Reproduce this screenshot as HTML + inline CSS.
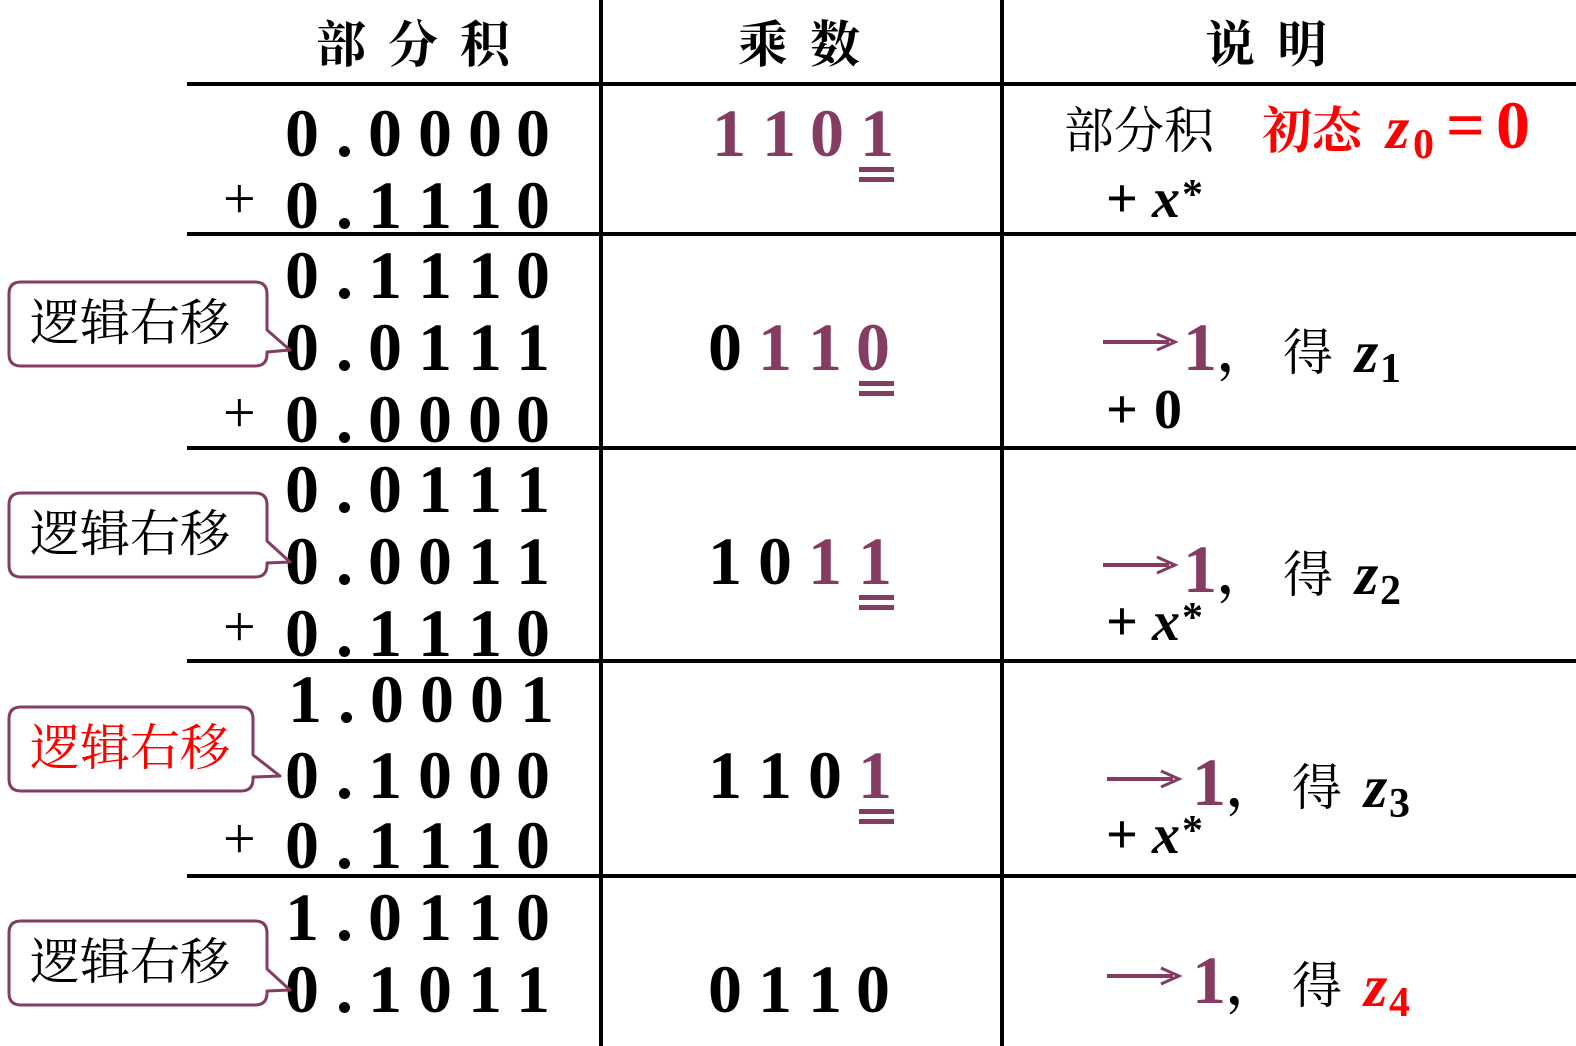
<!DOCTYPE html>
<html><head><meta charset="utf-8"><style>
html,body{margin:0;padding:0;background:#fff;}
svg{display:block}
.n{font-family:"Liberation Serif",serif;font-weight:bold;font-size:68px;}
.c{font-family:"Liberation Serif","Noto Serif CJK SC",serif;font-size:50px;}
.h{font-family:"Liberation Serif","Noto Serif CJK SC",serif;font-size:50px;font-weight:bold;}
.p{fill:#843C62}
.r{fill:#ff0000}
.z{font-family:"Liberation Serif",serif;font-weight:bold;font-style:italic;font-size:60px;}
.s{font-family:"Liberation Serif",serif;font-weight:bold;font-size:42px;}
</style></head><body>
<svg width="1576" height="1046" viewBox="0 0 1576 1046" xmlns="http://www.w3.org/2000/svg">
<g fill="#000" stroke="none">
<rect x="599" y="0" width="4" height="1046"/>
<rect x="1000" y="0" width="4" height="1046"/>
<rect x="187" y="82" width="1389" height="4"/>
<rect x="187" y="232" width="1389" height="4"/>
<rect x="187" y="446" width="1389" height="4"/>
<rect x="187" y="659" width="1389" height="4"/>
<rect x="187" y="874" width="1389" height="4"/>
</g>
<text class="h" x="316" y="62" letter-spacing="22">部分积</text>
<text class="h" x="738" y="62" letter-spacing="22">乘数</text>
<text class="h" x="1205" y="62" letter-spacing="22">说明</text>

<g class="n">
<text x="285 336 368 418 468 516" y="156">0.0000</text>
<text x="285 336 368 418 468 516" y="228">0.1110</text>
<text x="285 336 368 418 468 516" y="298">0.1110</text>
<text x="285 336 368 418 468 516" y="370">0.0111</text>
<text x="285 336 368 418 468 516" y="442">0.0000</text>
<text x="285 336 368 418 468 516" y="512">0.0111</text>
<text x="285 336 368 418 468 516" y="584">0.0011</text>
<text x="285 336 368 418 468 516" y="656">0.1110</text>
<text x="288 338 370 420 470 520" y="722">1.0001</text>
<text x="285 336 368 418 468 516" y="798">0.1000</text>
<text x="285 336 368 418 468 516" y="868">0.1110</text>
<text x="285 336 368 418 468 516" y="940">1.0110</text>
<text x="285 336 368 418 468 516" y="1012">0.1011</text>
</g>
<g font-family="Liberation Serif,serif" font-size="58">
<text x="223" y="218">+</text>
<text x="223" y="432">+</text>
<text x="223" y="646">+</text>
<text x="223" y="858">+</text>
</g>

<g class="n">
<text class="p" x="712 762 810 860" y="156">1101</text>
<text x="708" y="370">0</text><text class="p" x="758 808 856" y="370">110</text>
<text x="708 758" y="584">10</text><text class="p" x="808 858" y="584">11</text>
<text x="708 758 808" y="798">110</text><text class="p" x="858" y="798">1</text>
<text x="708 758 808 856" y="1012">0110</text>
</g>
<g fill="#843C62">
<rect x="859" y="167" width="35" height="5"/><rect x="859" y="177" width="35" height="5"/>
<rect x="859" y="381" width="35" height="5"/><rect x="859" y="391" width="35" height="5"/>
<rect x="859" y="595" width="35" height="5"/><rect x="859" y="605" width="35" height="5"/>
<rect x="859" y="809" width="35" height="5"/><rect x="859" y="819" width="35" height="5"/>
</g>

<g fill="#fff" stroke="#843C62" stroke-width="3" stroke-linejoin="round">
<path d="M21 282 H255 Q267 282 267 294 V330 L290 350 L267 352 V354 Q267 366 255 366 H21 Q9 366 9 354 V294 Q9 282 21 282 Z"/>
<path d="M21 493 H255 Q267 493 267 505 V541 L290 562 L267 563 V565 Q267 577 255 577 H21 Q9 577 9 565 V505 Q9 493 21 493 Z"/>
<path d="M21 707 H241 Q253 707 253 719 V755 L280 776 L253 777 V779 Q253 791 241 791 H21 Q9 791 9 779 V719 Q9 707 21 707 Z"/>
<path d="M21 921 H255 Q267 921 267 933 V969 L290 990 L267 991 V993 Q267 1005 255 1005 H21 Q9 1005 9 993 V933 Q9 921 21 921 Z"/>
</g>
<g class="c" font-size="46">
<text x="30" y="340">逻辑右移</text>
<text x="30" y="551">逻辑右移</text>
<text x="30" y="765" fill="#ff0000">逻辑右移</text>
<text x="30" y="979">逻辑右移</text>
</g>

<text class="c" x="1064" y="148" font-size="54">部分积</text>
<text class="c r" x="1262" y="148" font-weight="bold" font-size="54">初态</text>
<text class="z r" x="1386" y="148">z</text>
<text class="s r" x="1413" y="158">0</text>
<text class="n r" x="1446" y="148" font-size="60">=</text>
<text class="n r" x="1496" y="148" font-size="60">0</text>

<g font-family="Liberation Serif,serif" font-weight="bold" font-size="56">
<text x="1106" y="217">+</text><text x="1152" y="217" font-style="italic">x</text><text x="1182" y="208" font-size="42">*</text>
<text x="1106" y="428">+</text><text x="1154" y="428">0</text>
<text x="1106" y="640">+</text><text x="1152" y="640" font-style="italic">x</text><text x="1182" y="631" font-size="42">*</text>
<text x="1106" y="853">+</text><text x="1152" y="853" font-style="italic">x</text><text x="1182" y="844" font-size="42">*</text>
</g>

<g>
<g transform="translate(1103,342)"><rect x="0" y="-2" width="66" height="4" fill="#843C62"/><path d="M54 -8 L72 0 L54 8" fill="none" stroke="#843C62" stroke-width="3"/></g>
<text class="n p" x="1183" y="370">1</text><text class="c" x="1218" y="370" font-weight="bold">，</text>
<text class="c" x="1283" y="370" font-size="54">得</text><text class="z" x="1355" y="372">z</text><text class="s" x="1380" y="382">1</text>

<g transform="translate(1103,565)"><rect x="0" y="-2" width="66" height="4" fill="#843C62"/><path d="M54 -8 L72 0 L54 8" fill="none" stroke="#843C62" stroke-width="3"/></g>
<text class="n p" x="1183" y="592">1</text><text class="c" x="1218" y="592" font-weight="bold">，</text>
<text class="c" x="1283" y="592" font-size="54">得</text><text class="z" x="1355" y="594">z</text><text class="s" x="1380" y="604">2</text>

<g transform="translate(1107,779)"><rect x="0" y="-2" width="66" height="4" fill="#843C62"/><path d="M54 -8 L72 0 L54 8" fill="none" stroke="#843C62" stroke-width="3"/></g>
<text class="n p" x="1192" y="805">1</text><text class="c" x="1227" y="805" font-weight="bold">，</text>
<text class="c" x="1292" y="805" font-size="54">得</text><text class="z" x="1364" y="807">z</text><text class="s" x="1389" y="817">3</text>

<g transform="translate(1107,976)"><rect x="0" y="-2" width="66" height="4" fill="#843C62"/><path d="M54 -8 L72 0 L54 8" fill="none" stroke="#843C62" stroke-width="3"/></g>
<text class="n p" x="1192" y="1003">1</text><text class="c" x="1227" y="1003" font-weight="bold">，</text>
<text class="c" x="1292" y="1003" font-size="54">得</text><text class="z r" x="1364" y="1006">z</text><text class="s r" x="1389" y="1016">4</text>
</g>
</svg>
</body></html>
